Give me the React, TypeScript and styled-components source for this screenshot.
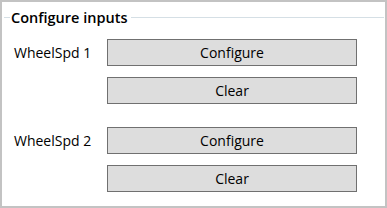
import React from 'react';
import styled, { createGlobalStyle } from 'styled-components';

const GlobalStyle = createGlobalStyle`
  html, body {
    margin: 0;
    padding: 0;
    background: #ffffff;
  }
  body {
    font-family: "Open Sans", "Noto Sans", "Liberation Sans", sans-serif;
    color: #000000;
  }
`;

const Frame = styled.div`
  box-sizing: border-box;
  width: 387px;
  height: 208px;
  border: 2px solid #c3c3c3;
  background: #ffffff;
  padding-top: 5px;
`;

const Header = styled.div`
  display: flex;
  align-items: center;
  height: 20px;
  padding-left: 2px;
  padding-right: 1px;
`;

const Line = styled.div<{ $grow?: boolean }>`
  height: 1px;
  background: #d5dfe5;
  width: ${(p) => (p.$grow ? 'auto' : '6px')};
  flex: ${(p) => (p.$grow ? '1' : 'none')};
`;

const Title = styled.span`
  font-size: 14.5px;
  font-weight: 600;
  padding: 0 4px 0 1px;
  white-space: nowrap;
`;

const Blocks = styled.div`
  display: flex;
  flex-direction: column;
  gap: 23px;
  margin-top: 12px;
  padding-left: 12px;
`;

const Block = styled.div`
  display: grid;
  grid-template-columns: 93px 250px;
  row-gap: 11px;
`;

const Label = styled.span`
  align-self: center;
  font-size: 14px;
  white-space: nowrap;
`;

const Button = styled.button<{ $col?: number }>`
  grid-column: ${(p) => p.$col ?? 2};
  box-sizing: border-box;
  height: 27px;
  border: 1px solid #707070;
  background: #dddddd;
  font-family: inherit;
  font-size: 14px;
  line-height: 1;
  color: #000000;
  padding: 0;
  cursor: pointer;
`;

const inputs = ['WheelSpd 1', 'WheelSpd 2'];

export default function App() {
  return (
    <>
      <GlobalStyle />
      <Frame>
        <Header>
          <Line />
          <Title>Configure inputs</Title>
          <Line $grow />
        </Header>
        <Blocks>
          {inputs.map((name) => (
            <Block key={name}>
              <Label>{name}</Label>
              <Button>Configure</Button>
              <Button $col={2}>Clear</Button>
            </Block>
          ))}
        </Blocks>
      </Frame>
    </>
  );
}
